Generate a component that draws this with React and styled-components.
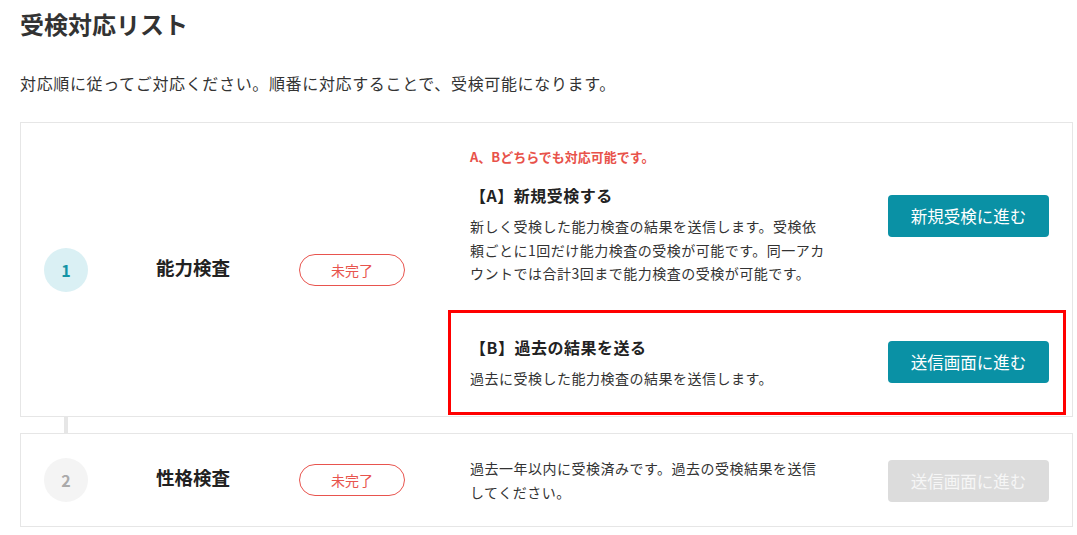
import React from 'react';
import styled, { createGlobalStyle } from 'styled-components';

const GlobalStyle = createGlobalStyle`
  body {
    margin: 0;
    background: #ffffff;
    color: #333333;
    font-family: "Noto Sans CJK JP", "Noto Sans", sans-serif;
  }
`;

const steps = [
  {
    no: 1,
    name: '能力検査',
    active: true,
  },
  {
    no: 2,
    name: '性格検査',
    active: false,
  },
];

const App = () => {
  return (
    <Page>
      <GlobalStyle />
      <Title>受検対応リスト</Title>
      <Lead>対応順に従ってご対応ください。順番に対応することで、受検可能になります。</Lead>

      <Card>
        <StepHead step={steps[0]} />
        <RightPanel>
          <Option>
            <OptionText>
              <Note>A、Bどちらでも対応可能です。</Note>
              <OptionTitle>【A】新規受検する</OptionTitle>
              <Desc>
                新しく受検した能力検査の結果を送信します。受検依頼ごとに1回だけ能力検査の受検が可能です。同一アカウントでは合計3回まで能力検査の受検が可能です。
              </Desc>
            </OptionText>
            <ActionButton>新規受検に進む</ActionButton>
          </Option>
          <Option $highlight>
            <OptionText>
              <OptionTitle>【B】過去の結果を送る</OptionTitle>
              <Desc>過去に受検した能力検査の結果を送信します。</Desc>
            </OptionText>
            <ActionButton>送信画面に進む</ActionButton>
          </Option>
        </RightPanel>
      </Card>

      <Connector />

      <Card>
        <StepHead step={steps[1]} />
        <RightPanel $compact>
          <Option>
            <OptionText>
              <Desc>過去一年以内に受検済みです。過去の受検結果を送信してください。</Desc>
            </OptionText>
            <ActionButton disabled>送信画面に進む</ActionButton>
          </Option>
        </RightPanel>
      </Card>
    </Page>
  );
};

const StepHead = ({ step }) => (
  <StepInfo>
    <StepNo $active={step.active}>{step.no}</StepNo>
    <StepName>{step.name}</StepName>
    <Badge>未完了</Badge>
  </StepInfo>
);

export default App;

const Page = styled.div`
  padding: 8px 4px 20px 20px;
`;

const Title = styled.h1`
  margin: 0;
  font-size: 24px;
  line-height: 32px;
  font-weight: 700;
  color: #333333;
`;

const Lead = styled.p`
  margin: 31px 0 0;
  font-size: 16px;
  line-height: 24px;
  letter-spacing: 0.65px;
  color: #333333;
`;

const Card = styled.div`
  border: 1px solid #e6e6e6;
  display: flex;
  align-items: center;
  padding-right: 5px;

  ${Lead} + & {
    margin-top: 27px;
  }
`;

const Connector = styled.div`
  width: 4px;
  height: 16px;
  margin-left: 44px;
  background: #e6e6e6;
`;

const StepInfo = styled.div`
  display: flex;
  align-items: center;
  flex-shrink: 0;
`;

const StepNo = styled.div`
  width: 44px;
  height: 44px;
  margin-left: 23px;
  border-radius: 50%;
  display: flex;
  align-items: center;
  justify-content: center;
  background: ${({ $active }) => ($active ? '#daf0f4' : '#f4f4f4')};
  color: ${({ $active }) => ($active ? '#1494a6' : '#aaaaaa')};
  font-size: 16px;
  font-weight: 700;
`;

const StepName = styled.div`
  margin-left: 68px;
  width: 143px;
  font-size: 18.5px;
  font-weight: 700;
  color: #222222;
  margin-top: -6px;
`;

const Badge = styled.div`
  width: 106px;
  height: 32px;
  box-sizing: border-box;
  border: 1px solid #e8544e;
  border-radius: 16px;
  display: flex;
  align-items: center;
  justify-content: center;
  color: #e8544e;
  font-size: 14px;
`;

const RightPanel = styled.div`
  margin-left: 43px;
  width: 618px;
  display: flex;
  flex-direction: column;
  gap: 24px;
  padding: ${({ $compact }) => ($compact ? '23px 0 22px' : '24px 0 1px')};
`;

const Option = styled.div`
  display: flex;
  align-items: center;
  justify-content: space-between;
  border: ${({ $highlight }) => ($highlight ? '3px solid #ff0000' : 'none')};
  padding: ${({ $highlight }) => ($highlight ? '22px 14px 22px 19px' : '0 17px 0 22px')};
`;

const OptionText = styled.div`
  width: 359px;
`;

const Note = styled.div`
  font-size: 13px;
  line-height: 20px;
  font-weight: 700;
  color: #e8524a;
  margin-bottom: 16px;
`;

const OptionTitle = styled.div`
  font-size: 16px;
  line-height: 24px;
  font-weight: 700;
  color: #222222;
  letter-spacing: 0.5px;
  margin-bottom: 8px;
`;

const Desc = styled.p`
  margin: 0;
  font-size: 14px;
  line-height: 23.5px;
  letter-spacing: 0.5px;
  color: #333333;
`;

const ActionButton = styled.button`
  width: 161px;
  height: 42px;
  border: none;
  border-radius: 4px;
  background: ${({ disabled }) => (disabled ? '#dcdcdc' : '#0a91a5')};
  color: ${({ disabled }) => (disabled ? '#f6f6f6' : '#ffffff')};
  font-family: inherit;
  font-size: 16.5px;
  cursor: ${({ disabled }) => (disabled ? 'default' : 'pointer')};
  flex-shrink: 0;
`;
